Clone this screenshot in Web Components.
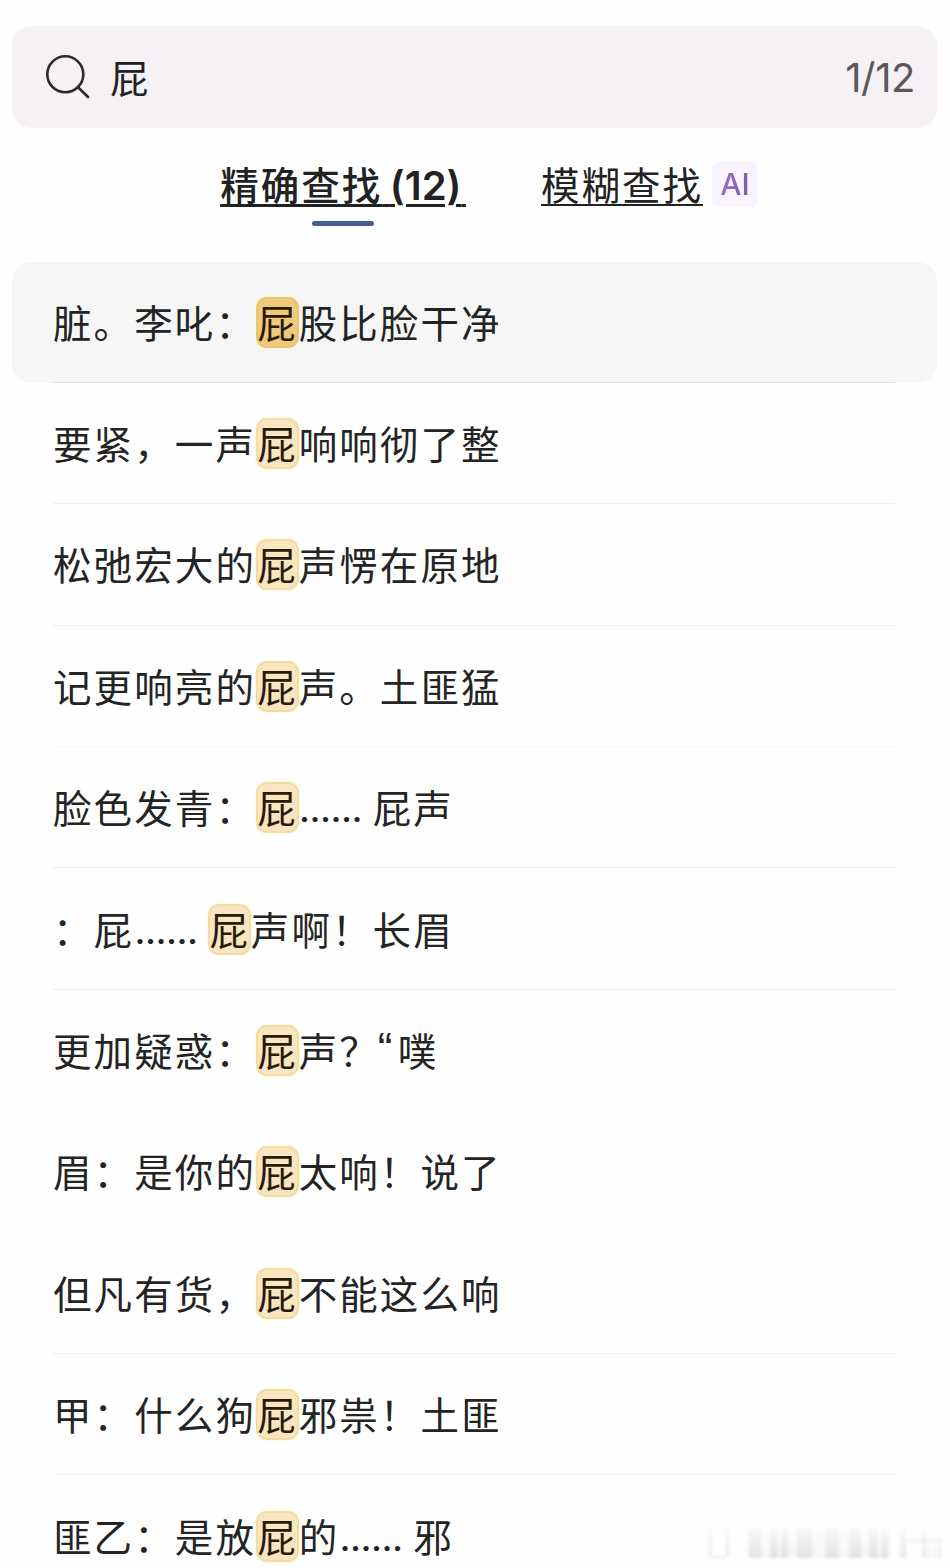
<!DOCTYPE html>
<html lang="zh-CN">
<head>
<meta charset="utf-8">
<title>查找</title>
<style>
html,body{margin:0;background:#fefefe}
body{width:950px;height:1568px;overflow:hidden;position:relative;font-family:Inter,"Noto Sans CJK SC",sans-serif;font-feature-settings:"calt" 0;color:#242424}
</style>
</head>
<body>
<find-panel>
  <search-bar slot="search" count="1/12">屁</search-bar>
  <find-tabs slot="tabs"></find-tabs>
  <result-row active line="#e3e3e4">脏。李叱：<hit-mark active>屁</hit-mark>股比脸干净</result-row>
  <result-row line="#f0f0f0">要紧，一声<hit-mark>屁</hit-mark>响响彻了整</result-row>
  <result-row line="#f0f0f0">松弛宏大的<hit-mark>屁</hit-mark>声愣在原地</result-row>
  <result-row line="#f8f8f8">记更响亮的<hit-mark>屁</hit-mark>声。土匪猛</result-row>
  <result-row line="#efefef">脸色发青：<hit-mark>屁</hit-mark><dot-run>……</dot-run>屁声</result-row>
  <result-row line="#efefef">：屁<dot-run>……</dot-run><hit-mark>屁</hit-mark>声啊！长眉</result-row>
  <result-row line="#fefefe">更加疑惑：<hit-mark>屁</hit-mark>声？<open-quote>“</open-quote>噗</result-row>
  <result-row line="#fefefe">眉：是你的<hit-mark>屁</hit-mark>太响！说了</result-row>
  <result-row line="#f0f0f0">但凡有货，<hit-mark>屁</hit-mark>不能这么响</result-row>
  <result-row line="#f2f2f2">甲：什么狗<hit-mark>屁</hit-mark>邪祟！土匪</result-row>
  <result-row line="#fefefe">匪乙：是放<hit-mark>屁</hit-mark>的<dot-run>……</dot-run>邪</result-row>
</find-panel>
<faded-mark></faded-mark>
<script>
function define(name, html, setup) {
  const t = document.createElement('template');
  t.innerHTML = html;
  customElements.define(name, class extends HTMLElement {
    constructor() {
      super();
      this.attachShadow({mode: 'open'}).appendChild(t.content.cloneNode(true));
    }
    connectedCallback() { if (setup) setup(this, this.shadowRoot); }
  });
}

define('find-panel', `<style>
:host{display:flex;flex-direction:column;padding:26px 13px 0 12px;box-sizing:border-box;width:950px}
.list{display:flex;flex-direction:column}
</style><slot name="search"></slot><slot name="tabs"></slot><div class="list"><slot></slot></div>`);

define('search-bar', `<style>
:host{display:flex;align-items:center;height:102px;border-radius:20px;background:#f6f1f5;padding:0 22px 0 33px;box-sizing:border-box}
svg{width:46px;height:46px;flex:none;margin-right:19px}
.q{flex:1;font-family:"Noto Sans CJK SC",sans-serif;font-size:38.5px;line-height:60px;color:#222;margin-top:-3px}
.n{font-family:Inter,sans-serif;font-size:40px;line-height:60px;color:#5a5858;letter-spacing:-.4px;margin-top:2px}
</style>
<svg viewBox="0 0 46 46" fill="none" stroke="#2c2a2c" stroke-width="2.6" stroke-linecap="round"><circle cx="20.3" cy="20.3" r="18"/><path d="M33 33.2L43 43"/></svg>
<span class="q"><slot></slot></span><span class="n"></span>`,
(el, r) => { r.querySelector('.n').textContent = el.getAttribute('count'); });

define('find-tabs', `<style>
:host{display:flex;height:134px;padding-left:208px;box-sizing:border-box;align-items:flex-start}
.tab{display:flex;flex-direction:column;align-items:center;padding-top:28px;font-family:Inter,"Noto Sans CJK SC",sans-serif;font-size:38.5px;line-height:60px;white-space:pre;color:#222}
.cjk{letter-spacing:2px}
.t{height:60px;text-decoration:underline;text-decoration-thickness:3px;text-underline-offset:4px}
.on{font-weight:600;width:246px;margin-right:75px}
.on .cjk{font-weight:500}
.on .num{font-size:40px}
.on .gap{letter-spacing:-2px}
.on small{font-size:17px}
.off .t{text-decoration-thickness:2px}
.bar{width:62px;height:5px;border-radius:3px;background:#41608f;margin-top:5px}
</style>
<div class="tab on"><span class="t"><span class="cjk">精确查找</span><span class="gap"> </span><span class="num">(12)</span><small>&nbsp;</small></span><span class="bar"></span></div>
<div class="tab off"><span class="t"><span class="cjk">模糊查找</span></span></div>
<ai-badge>AI</ai-badge>`);

define('ai-badge', `<style>
:host{display:flex;align-items:center;justify-content:center;width:46px;height:45px;margin:34px 0 0 9px;border-radius:7px;background:#f8f4fd}
span{font:500 30px/45px Inter,sans-serif;background:linear-gradient(100deg,#a272cf,#7458a8);-webkit-background-clip:text;background-clip:text;color:transparent}
</style><span><slot></slot></span>`);

define('result-row', `<style>
:host{display:flex;align-items:center;height:121.4px;box-sizing:border-box;flex:none;border-radius:20px;padding:0 42px 1px 41px;
background:linear-gradient(var(--line),var(--line)) 41px calc(100% - .5px)/842px 1px no-repeat}
:host([active]){background-color:#f6f6f6}
p{margin:0;display:flex;align-items:flex-start;white-space:nowrap;height:63px;font-family:"Noto Sans CJK SC",sans-serif;font-size:38.5px;line-height:60px;letter-spacing:2.1px;color:#242424}
</style><p><slot></slot></p>`,
el => el.style.setProperty('--line', el.getAttribute('line')));

define('hit-mark', `<style>
:host{display:block;flex:none;box-sizing:border-box;width:43px;height:51px;line-height:44px;text-align:left;letter-spacing:0;border:2px solid #f1dca4;border-radius:11px;background:#f9e6c1;color:#2a1a08;margin:6px -.4px 0 0;box-shadow:0 0 3px #fff3c4}
:host([active]){background:#f0ca7c;border-color:#eac56f}
span{display:block;margin:0 -2px 0 -.8px}
</style><span><slot></slot></span>`);

define('dot-run', `<style>
:host{display:block;flex:none;box-sizing:border-box;width:74px;padding:4px 0 0 .5px;font-family:Inter,sans-serif;font-weight:600;font-size:33px;letter-spacing:0;white-space:nowrap}
</style><slot></slot>`);

define('open-quote', `<style>
:host{display:block;flex:none;width:18px;font-family:"Liberation Sans",sans-serif;font-size:44px;letter-spacing:0;text-indent:-2px}
</style><slot></slot>`);

define('faded-mark', `<style>
:host{position:absolute;left:700px;top:1522px;width:245px;height:40px;pointer-events:none}
svg{display:block;filter:blur(1.8px)}
</style>
<svg width="245" height="40" viewBox="0 0 245 40" aria-hidden="true">
<defs><linearGradient id="g" x1="0" y1="0" x2="0" y2="40" gradientUnits="userSpaceOnUse"><stop offset="0" stop-color="#888" stop-opacity="0"/><stop offset="1" stop-color="#888" stop-opacity=".2"/></linearGradient></defs>
<g fill="url(#g)"><path d="M9 5h3v29h-3zM26 5h3v29h-3zM12 34h14v2H12z"/><path d="M49 6h12v30H49zM70 6h8v30h-8zM81 6h7v30h-7zM97 6h15v30H97zM125 6h14v30h-14zM149 6h12v30h-12zM169 6h9v30h-9zM181 6h7v30h-7zM200 6h6v30h-6zM222 6h4v30h-4zM228 22h2v14h-2zM233 22h2v14h-2zM238 22h3v14h-3z"/><path opacity=".4" d="M47 6H190V36H47z"/><path d="M206 17h36v3h-36z"/></g></svg>`);
</script>
</body>
</html>
